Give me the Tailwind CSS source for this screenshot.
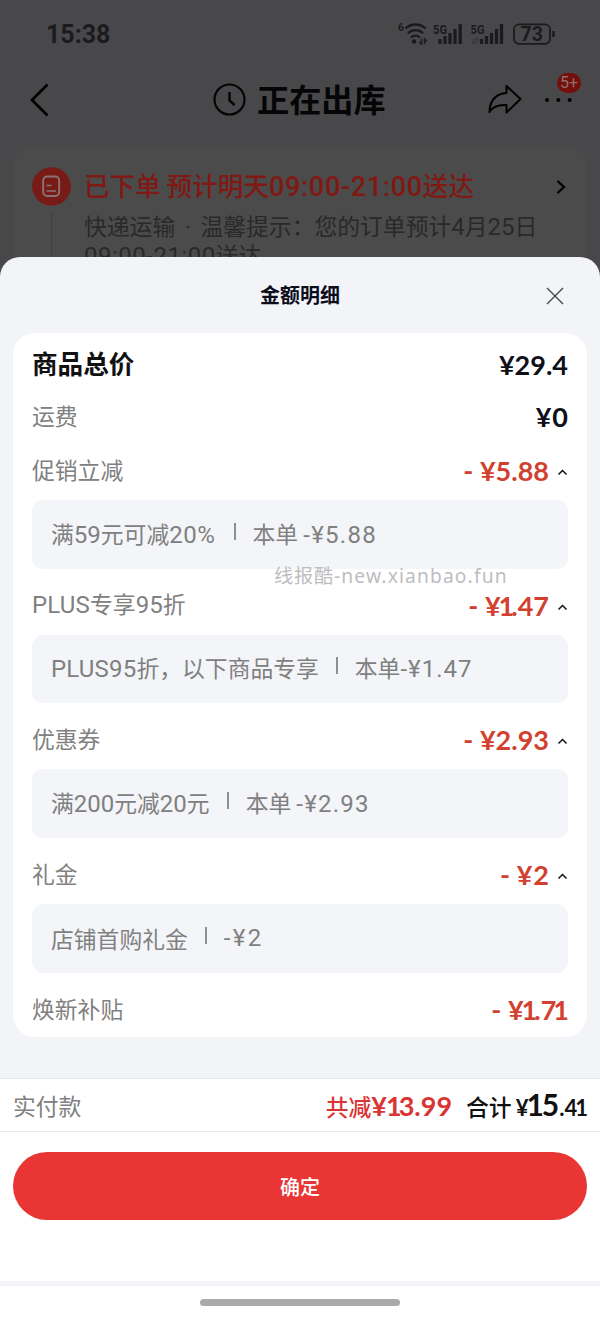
<!DOCTYPE html>
<html lang="zh-CN">
<head>
<meta charset="utf-8">
<meta name="viewport" content="width=device-width">
<title>金额明细</title>
<script src="https://cdn.jsdelivr.net/npm/@tailwindcss/browser@4"></script>
</head>
<body class="w-[600px] h-[1318px] overflow-hidden bg-[#48484a] font-['Noto_Sans_CJK_SC',sans-serif] leading-none">
<div class="relative flex h-[1318px] w-[600px] flex-col overflow-hidden">
  <!-- dimmed order page -->
  <div class="flex h-[257px] flex-col overflow-hidden">
    <div class="flex h-[68px] shrink-0 items-center justify-between pl-[46px] pr-[45px] text-[#1b1b1d]">
      <span class="font-['Roboto',sans-serif] text-[25px] font-bold">15:38</span>
      <svg class="h-[28px] w-[158px]" viewBox="0 0 158 28" fill="none" stroke="#1b1b1d">
        <g font-family="Roboto, sans-serif" font-weight="700" fill="#1b1b1d" stroke="none">
          <text x="1" y="11" font-size="10.500">6</text>
          <text x="36" y="13.500" font-size="13" textLength="14" lengthAdjust="spacingAndGlyphs">5G</text>
          <text x="73.500" y="13.500" font-size="13" textLength="14" lengthAdjust="spacingAndGlyphs">5G</text>
        </g>
        <g stroke-width="2.300">
          <path d="M8.500 8.500a14.500 14.500 0 0 1 20 0M11 13.200a10.500 10.500 0 0 1 15 0M14 17.500a6.500 6.500 0 0 1 9 0"/>
        </g>
        <circle cx="17" cy="21.500" r="2.300" fill="#1b1b1d" stroke="none"/>
        <path d="M24.500 19v5l-2.500-2M27.500 24v-5l2.500 2.500" stroke-width="1.500"/>
        <path d="M45 24v-5M50 24v-8M55 24V13M60 24V9M65.200 24V4" transform="translate(-2 0)" stroke-width="3.200"/>
        <path d="M86 24v-5M91 24v-8M96 24V13M101 24V9M106 24V4" transform="translate(-1.500 0)" stroke-width="3.200"/>
        <path d="M77 18.500v5l-2-2M79.500 23.500v-5l2 2" stroke="#38383a" stroke-width="1.300"/>
        <rect x="117" y="4.300" width="36" height="19.500" rx="5" stroke-width="1.800"/>
        <path d="M156.500 11v6" stroke-width="2.500"/>
        <text x="123.500" y="21" font-family="Roboto, sans-serif" font-weight="700" font-size="19.500" fill="#1b1b1d" stroke="none">73</text>
      </svg>
    </div>
    <div class="flex h-[64px] shrink-0 items-center pl-[29px] pr-[18px] text-black">
      <svg class="h-[34px] w-[20px]" viewBox="0 0 20 34" fill="none" stroke="#000" stroke-width="2.700"><path d="M18.500 1.500 3 17l15.500 15.500"/></svg>
      <svg class="ml-[164px] h-[34px] w-[34px]" viewBox="0 0 34 34" fill="none" stroke="#050505" stroke-width="2.200"><circle cx="16.500" cy="16.500" r="15"/><path d="M16.500 9v8.500l5 4.500" stroke-width="2.500"/></svg>
      <h1 class="ml-[10px] w-[129px] whitespace-nowrap pb-[3px] text-[32.200px] font-bold text-[#050505]">正在出库</h1>
      <svg class="ml-[102px] h-[32px] w-[34px]" viewBox="0 0 34 32" fill="none" stroke="#000" stroke-width="2" stroke-linejoin="round"><path d="M18.500 2 32.500 15 18.500 28.500v-7.500C10.500 20.500 4.500 22.500 1.500 28 1.500 17.500 7.500 9.500 18.500 9Z"/></svg>
      <div class="relative ml-[22px] flex w-[38px] items-center">
        <svg class="h-[6px] w-[30px]" viewBox="0 0 30 6" fill="#000"><circle cx="3" cy="3" r="2"/><circle cx="14.300" cy="3" r="2"/><circle cx="25.700" cy="3" r="2"/></svg>
        <span class="absolute -top-[24px] left-[13px] flex h-[20px] w-[24px] items-center justify-center rounded-full bg-[#740f0b] font-['Roboto',sans-serif] text-[16px] text-[#8f7270]">5+</span>
      </div>
    </div>
    <div class="mx-[13px] mt-[16px] flex h-[150px] shrink-0 rounded-t-[18px] bg-[#4b4b4b]">
      <div class="flex w-[39px] ml-[19px] flex-col items-center pt-[19px]">
        <svg class="h-[39px] w-[39px] shrink-0" viewBox="0 0 39 39" fill="none"><circle cx="19.500" cy="19.500" r="19.300" fill="#781a16"/><rect x="11.200" y="9.500" width="16" height="19.500" rx="4" stroke="#8a7472" stroke-width="1.900"/><path d="M14.500 18.500h5M14.500 24h9.500" stroke="#8a7472" stroke-width="1.700"/></svg>
        <div class="mt-[6px] w-[1.500px] flex-1 bg-[#414141]"></div>
      </div>
      <div class="ml-[13px] w-[460px] pt-[24px]">
        <div class="h-[26px] whitespace-nowrap text-[25.600px] font-medium text-[#801813]">已下单 预计明天<span class="font-['Roboto'] text-[27px] tracking-[0.7px]">09:00-21:00</span>送达</div>
        <div class="mt-[15px] whitespace-nowrap text-[22.800px] leading-[26.500px] text-[#292929]">快递运输<span class="mx-[4px] font-['Roboto']"> · </span>温馨提示：您的订单预计<span class="font-['Roboto'] text-[24px]">4</span>月<span class="font-['Roboto'] text-[24px]">25</span>日<br><span class="font-['Roboto'] text-[24px] tracking-[0.5px]">09:00-21:00</span>送达</div>
      </div>
      <svg class="mt-[31px] ml-[12px] h-[16px] w-[10px]" viewBox="0 0 10 16" fill="none" stroke="#000" stroke-width="2.300"><path d="m1.500 2 6.500 6-6.500 6"/></svg>
    </div>
  </div>

  <!-- amount details sheet -->
  <div class="flex flex-1 flex-col rounded-t-[20px] bg-[#f3f4f8]">
    <div class="relative flex h-[76px] shrink-0 items-center justify-center">
      <h2 class="text-[20px] font-bold text-[#0d0d1c]">金额明细</h2>
      <svg class="absolute right-[36px] top-[30px] h-[18px] w-[18px]" viewBox="0 0 18 18" fill="none" stroke="#444" stroke-width="1.300"><path d="m1 1 16 16M17 1 1 17"/></svg>
    </div>
    <div class="mx-[13px] flex h-[704px] shrink-0 flex-col whitespace-nowrap rounded-[22px] bg-white px-[19px] text-[22.800px] text-[#808080]">
      <div class="flex h-[62px] items-center justify-between">
        <span class="pb-[3px] text-[25.600px] font-bold text-[#111]">商品总价</span>
        <span class="font-['Lato',sans-serif] text-[27px] font-bold text-[#0f0f1a]">¥29.4</span>
      </div>
      <div class="flex h-[43px] items-center justify-between">
        <span>运费</span>
        <span class="font-['Lato',sans-serif] text-[27px] font-bold text-[#0f0f1a]">¥<span class="ml-px">0</span></span>
      </div>
      <div class="flex h-[62px] items-center justify-between pt-[2px]">
        <span>促销立减</span>
        <div class="flex items-center gap-[8px]"><span class="font-['Lato',sans-serif] text-[27px] font-bold text-[#d2402f]">- ¥5.88</span><svg class="mt-[3px] h-[10px] w-[11px]" viewBox="0 0 11 10" fill="none" stroke="#111" stroke-width="1.500"><path d="m1.500 7.500 4-4 4 4"/></svg></div>
      </div>
      <div class="flex h-[68.500px] items-center rounded-[11px] bg-[#f4f5f9] px-[19px] pt-px"><span>满<span class="font-['Roboto'] text-[24px]">59</span>元可减<span class="font-['Roboto'] text-[24px] tracking-[0.6px]">20%</span></span><i class="ml-[18px] mr-[17px] mb-[7px] h-[17px] w-[2px] bg-[#8f8f90]"></i><span>本单 <span class="font-['Roboto'] text-[24px] tracking-[1.300px]">-¥5.88</span></span></div>
      <div class="flex h-[66.200px] items-center justify-between pt-[7px]">
        <span><span class="font-['Roboto'] text-[24px] tracking-[0.200px]">PLUS</span>专享<span class="font-['Roboto'] text-[24px]">95</span>折</span>
        <div class="flex items-center gap-[8px]"><span class="font-['Lato',sans-serif] text-[27px] font-bold text-[#d2402f]">- ¥<span class="-ml-[2px] -mr-[3px]">1</span>.47</span><svg class="mt-[3px] h-[10px] w-[11px]" viewBox="0 0 11 10" fill="none" stroke="#111" stroke-width="1.500"><path d="m1.500 7.500 4-4 4 4"/></svg></div>
      </div>
      <div class="flex h-[68.500px] items-center rounded-[11px] bg-[#f4f5f9] px-[19px] pt-px"><span><span class="font-['Roboto'] text-[24px] tracking-[0.200px]">PLUS95</span>折，以下商品专享</span><i class="mx-[17px] mb-[7px] h-[17px] w-[2px] bg-[#8f8f90]"></i><span>本单<span class="font-['Roboto'] text-[24px] tracking-[1px]">-¥1.47</span></span></div>
      <div class="flex h-[66.200px] items-center justify-between pt-[7px]">
        <span>优惠券</span>
        <div class="flex items-center gap-[8px]"><span class="font-['Lato',sans-serif] text-[27px] font-bold text-[#d2402f]">- ¥2.93</span><svg class="mt-[3px] h-[10px] w-[11px]" viewBox="0 0 11 10" fill="none" stroke="#111" stroke-width="1.500"><path d="m1.500 7.500 4-4 4 4"/></svg></div>
      </div>
      <div class="flex h-[68.500px] items-center rounded-[11px] bg-[#f4f5f9] px-[19px] pt-px"><span>满<span class="font-['Roboto'] text-[24px]">200</span>元减<span class="font-['Roboto'] text-[24px]">20</span>元</span><i class="mx-[17px] mb-[7px] h-[17px] w-[2px] bg-[#8f8f90]"></i><span>本单 <span class="font-['Roboto'] text-[24px] tracking-[1.200px]">-¥2.93</span></span></div>
      <div class="flex h-[66.500px] items-center justify-between pt-[6px]">
        <span>礼金</span>
        <div class="flex items-center gap-[8px]"><span class="font-['Lato',sans-serif] text-[27px] font-bold text-[#d2402f]">- ¥<span class="ml-px">2</span></span><svg class="mt-[3px] h-[10px] w-[11px]" viewBox="0 0 11 10" fill="none" stroke="#111" stroke-width="1.500"><path d="m1.500 7.500 4-4 4 4"/></svg></div>
      </div>
      <div class="flex h-[68.500px] items-center rounded-[11px] bg-[#f4f5f9] px-[19px] pt-px"><span>店铺首购礼金</span><i class="mx-[17px] mb-[7px] h-[17px] w-[2px] bg-[#8f8f90]"></i><span class="mb-[3px] font-['Roboto'] text-[24px] tracking-[2.400px]">-¥2</span></div>
      <div class="flex flex-1 items-center justify-between pt-[9px]">
        <span>焕新补贴</span>
        <span class="font-['Lato',sans-serif] text-[27px] font-bold text-[#d2402f]">- ¥<span class="-ml-[2px] -mr-[3px]">1</span>.7<span class="-ml-[3px] -mr-[1px]">1</span></span>
      </div>
    </div>
    <div class="mt-[41px] flex h-[54px] shrink-0 items-center justify-between border-y border-[#e8e9ec] bg-white px-[13px] text-[22.800px]">
      <span class="pt-[2px] text-[#808080]">实付款</span>
      <div class="flex items-baseline pb-[2px]">
        <span class="font-medium text-[#d93535]">共减</span><span class="font-['Lato',sans-serif] text-[27px] font-bold text-[#d93535]">¥<span class="-ml-[1px] -mr-[3px]">1</span>3.99</span>
        <span class="ml-[14px] font-medium text-[#111]">合计</span><span class="ml-[4px] font-['Lato',sans-serif] text-[22px] font-bold text-[#111]">¥<span class="text-[30px]"><span class="-ml-[2px] -mr-[2px]">1</span>5</span>.4<span class="-ml-[2px] -mr-[1px]">1</span></span>
      </div>
    </div>
    <div class="flex h-[149px] shrink-0 flex-col bg-white px-[13px] pt-[20px]">
      <button class="flex h-[68px] items-center justify-center rounded-full bg-[#ea3535] pt-[2px] text-[20px] font-medium text-white">确定</button>
    </div>
    <div class="mt-[5px] flex flex-1 justify-center bg-white pt-[13px]"><div class="h-[7px] w-[200px] rounded-full bg-[#aaa]"></div></div>
  </div>
  <div class="absolute left-[274px] top-[566px] whitespace-nowrap font-['Noto_Sans','Noto_Sans_CJK_SC',sans-serif] text-[19.200px] tracking-[0.8px] text-[#bdbdbf]">线报酷<span class="tracking-[1.150px]">-new.xianbao.fun</span></div>
</div>
</body>
</html>
